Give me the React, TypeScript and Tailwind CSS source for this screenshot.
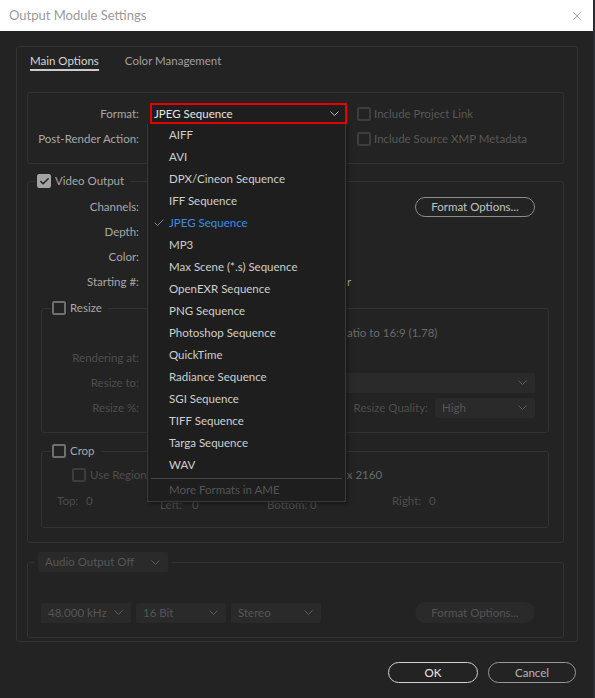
import { Check, X } from "lucide-react";

const formats = [
  "AIFF",
  "AVI",
  "DPX/Cineon Sequence",
  "IFF Sequence",
  "JPEG Sequence",
  "MP3",
  "Max Scene (*.s) Sequence",
  "OpenEXR Sequence",
  "PNG Sequence",
  "Photoshop Sequence",
  "QuickTime",
  "Radiance Sequence",
  "SGI Sequence",
  "TIFF Sequence",
  "Targa Sequence",
  "WAV",
];

function Chevron({ className = "" }: { className?: string }) {
  return (
    <svg width="9" height="5" viewBox="0 0 9 5" className={className}>
      <path d="M0.5 0.5 L4.5 4.5 L8.5 0.5" fill="none" stroke="currentColor" strokeWidth="1" />
    </svg>
  );
}

function Box({ checked = false, dim = false }: { checked?: boolean; dim?: boolean }) {
  if (checked) {
    return (
      <span className="flex h-[14px] w-[14px] shrink-0 items-center justify-center rounded-[2px] bg-[#a3a3a3]">
        <Check size={11} strokeWidth={3.5} className="text-[#262626]" />
      </span>
    );
  }
  return (
    <span
      className={
        dim
          ? "h-[14px] w-[14px] shrink-0 rounded-[2px] border-2 border-[#3d3d3d]"
          : "h-[14px] w-[14px] shrink-0 rounded-[2px] border-2 border-[#6f6f6f]"
      }
    />
  );
}

function Select({ label, width, dim = true }: { label: string; width: string; dim?: boolean }) {
  return (
    <div
      className={`flex h-[20px] items-center justify-between rounded-[2px] bg-[#2a2a2a] pl-[7px] pr-[8px] ${width} ${
        dim ? "text-[#565656]" : "text-[#b0b0b0]"
      }`}
    >
      <span>{label}</span>
      <Chevron className="text-[#5c5c5c]" />
    </div>
  );
}

export default function App() {
  return (
    <div className="relative h-[698px] w-[595px] overflow-hidden border-r-2 border-[#2a2e36] bg-[#232323] font-['Lato',sans-serif] text-[11.5px] text-[#a8a8a8]">
      {/* title bar */}
      <div className="flex h-[31px] items-center justify-between bg-white pl-[9px] pr-[9px]">
        <span className="text-[13px] text-[#9a9a9a]">Output Module Settings</span>
        <X size={14} strokeWidth={1.2} className="text-[#8a8a8a]" />
      </div>

      <div className="ml-[16px] mt-[15px] flex h-[596px] w-[562px] flex-col rounded-[3px] border border-[#333333] pl-[10px] pr-[13px]">
        {/* tabs */}
        <div className="ml-[3px] flex gap-[26px] pt-[6px] leading-[16px]">
          <span className="border-b-2 border-[#cccccc] text-[#d6d6d6]">Main Options</span>
          <span className="text-[#a0a0a0]">Color Management</span>
        </div>

        {/* format group */}
        <div className="mt-[21px] flex h-[72px] flex-col gap-[4px] rounded-[3px] border border-[#323232] pt-[10px]">
          <div className="flex h-[21px] items-center">
            <span className="w-[111px] text-right">Format:</span>
            <div className="ml-[11px] flex h-[21px] w-[197px] items-center justify-between border-2 border-[#e60000] bg-[#1e1e1e] pl-[2px] pr-[6px] text-[#e6e6e6]">
              <span>JPEG Sequence</span>
              <Chevron className="text-[#b8b8b8]" />
            </div>
            <div className="ml-[10px] flex items-center gap-[3px] text-[#585858]">
              <Box dim />
              <span>Include Project Link</span>
            </div>
          </div>
          <div className="flex h-[21px] items-center">
            <span className="w-[111px] text-right">Post-Render Action:</span>
            <div className="ml-[11px] h-[21px] w-[197px]" />
            <div className="ml-[10px] flex items-center gap-[3px] text-[#585858]">
              <Box dim />
              <span>Include Source XMP Metadata</span>
            </div>
          </div>
        </div>

        {/* video output */}
        <div className="mt-[17px] flex h-[362px] flex-col rounded-[3px] border border-[#323232]">
          <div className="-mt-[9px] ml-[8px] flex h-[16px] w-fit items-center gap-[4px] bg-[#232323] px-[1px] pr-[6px]">
            <Box checked />
            <span>Video Output</span>
          </div>
          <div className="mt-[5px] flex h-[25px] items-center">
            <span className="w-[111px] text-right">Channels:</span>
            <div className="ml-auto mr-[28px] flex h-[20px] w-[120px] items-center justify-center rounded-full border-[1.5px] border-[#8c8c8c] text-[#c4c4c4]">
              Format Options...
            </div>
          </div>
          <div className="flex h-[25px] items-center">
            <span className="w-[111px] text-right">Depth:</span>
          </div>
          <div className="flex h-[25px] items-center">
            <span className="w-[111px] text-right">Color:</span>
          </div>
          <div className="flex h-[25px] items-center">
            <span className="w-[111px] text-right">Starting #:</span>
            <span className="ml-[208px]">r</span>
          </div>

          {/* resize */}
          <div className="ml-[13px] mr-[14px] mt-[14px] flex h-[125px] flex-col rounded-[3px] border border-[#323232]">
            <div className="-mt-[9px] ml-[9px] flex h-[16px] w-fit items-center gap-[4px] bg-[#232323] px-[1px] pr-[6px]">
              <Box />
              <span>Resize</span>
            </div>
            <div className="mt-[4px] flex h-[25px] items-center text-[#6a6a6a]">
              <span className="ml-[305px]">atio to 16:9 (1.78)</span>
            </div>
            <div className="flex h-[25px] items-center text-[#4e4e4e]">
              <span className="w-[97px] text-right">Rendering at:</span>
            </div>
            <div className="flex h-[25px] items-center text-[#4e4e4e]">
              <span className="w-[97px] text-right">Resize to:</span>
              <div className="ml-auto mr-[13px]">
                <Select label="" width="w-[280px]" />
              </div>
            </div>
            <div className="flex h-[25px] items-center text-[#4e4e4e]">
              <span className="w-[97px] text-right">Resize %:</span>
              <span className="ml-auto mr-[7px]">Resize Quality:</span>
              <div className="mr-[13px]">
                <Select label="High" width="w-[100px]" />
              </div>
            </div>
          </div>

          {/* crop */}
          <div className="ml-[13px] mr-[14px] mt-[18px] flex h-[77px] flex-col rounded-[3px] border border-[#323232]">
            <div className="-mt-[9px] ml-[9px] flex h-[16px] w-fit items-center gap-[4px] bg-[#232323] px-[1px] pr-[6px]">
              <Box />
              <span>Crop</span>
            </div>
            <div className="mt-[3px] flex h-[26px] items-center text-[#4e4e4e]">
              <div className="ml-[30px] flex items-center gap-[4px]">
                <Box dim />
                <span>Use Region</span>
              </div>
              <span className="ml-[200px] text-[#6a6a6a]">x 2160</span>
            </div>
            <div className="flex h-[28px] items-end pb-[7px] text-[#4e4e4e]">
              <div className="ml-[15px] flex w-[103px]">
                <span className="w-[29px]">Top:</span>
                <span>0</span>
              </div>
              <div className="flex w-[107px] leading-[8px]">
                <span className="w-[32px]">Left:</span>
                <span>0</span>
              </div>
              <div className="flex w-[125px] leading-[8px]">
                <span className="w-[43px]">Bottom:</span>
                <span>0</span>
              </div>
              <div className="flex">
                <span className="w-[37px]">Right:</span>
                <span>0</span>
              </div>
            </div>
          </div>
        </div>

        {/* audio */}
        <div className="mt-[19px] flex h-[76px] flex-col rounded-[3px] border border-[#323232]">
          <div className="-mt-[11px] ml-[6px] w-fit bg-[#232323] px-[4px]">
            <Select label="Audio Output Off" width="w-[130px]" />
          </div>
          <div className="mt-[30px] flex items-center gap-[5px] pl-[13px]">
            <Select label="48.000 kHz" width="w-[90px]" />
            <Select label="16 Bit" width="w-[90px]" />
            <Select label="Stereo" width="w-[90px]" />
            <div className="ml-auto mr-[28px] flex h-[21px] w-[120px] items-center justify-center rounded-full bg-[#2a2a2a] text-[#545454]">
              Format Options...
            </div>
          </div>
        </div>
      </div>

      {/* buttons */}
      <div className="mr-[17px] mt-[20px] flex justify-end gap-[10px]">
        <button className="flex h-[21px] w-[90px] items-center justify-center rounded-full border-[1.5px] border-[#d2d2d2] text-[#ececec]">
          OK
        </button>
        <button className="flex h-[21px] w-[88px] items-center justify-center rounded-full border-[1.5px] border-[#9a9a9a] text-[#b8b8b8]">
          Cancel
        </button>
      </div>

      {/* open format menu */}
      <div className="absolute left-[147px] top-[124px] flex h-[378px] w-[199px] flex-col border border-t-0 border-[#3a3a3a] bg-[#1e1e1e] shadow-[2px_2px_4px_rgba(0,0,0,0.35)]">
        {formats.map((f) => (
          <div
            key={f}
            className={`flex h-[22px] shrink-0 items-center ${f === "JPEG Sequence" ? "text-[#3a8ee6]" : "text-[#cfcfcf]"}`}
          >
            <span className="flex w-[21px] justify-center">
              {f === "JPEG Sequence" && <Check size={12} strokeWidth={2} className="text-[#8a8a8a]" />}
            </span>
            <span>{f}</span>
          </div>
        ))}
        <div className="mx-[3px] mt-[2px] h-px bg-[#454545]" />
        <div className="flex h-[24px] items-center pl-[21px] text-[#555555]">More Formats in AME</div>
      </div>
    </div>
  );
}
